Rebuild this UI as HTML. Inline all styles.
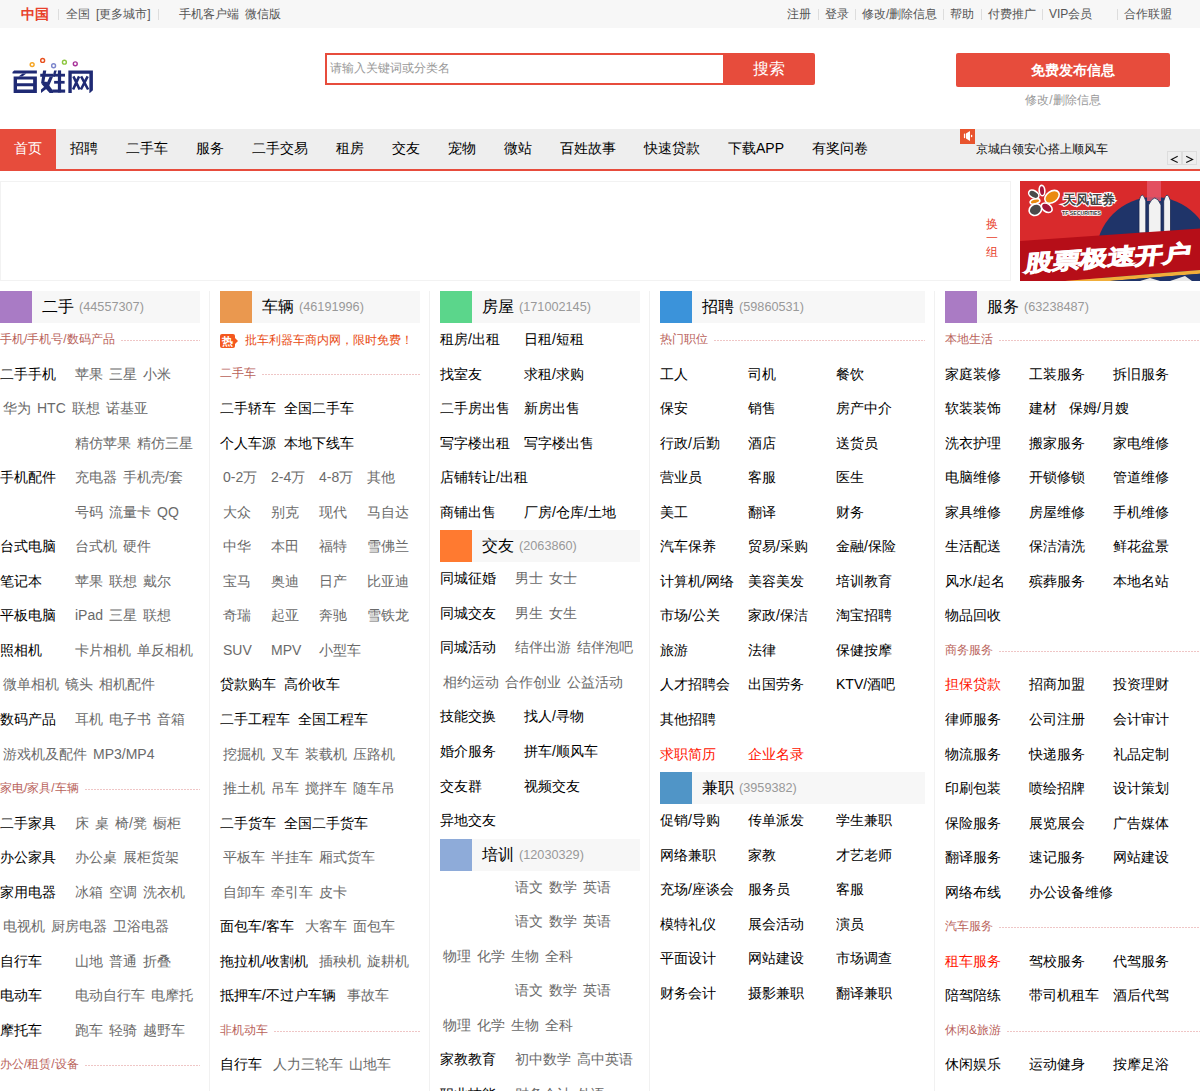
<!DOCTYPE html>
<html><head><meta charset="utf-8"><style>
*{margin:0;padding:0;box-sizing:border-box}
html,body{width:1200px;height:1091px;overflow:hidden;background:#fff}
body{position:relative;font-family:"Liberation Sans",sans-serif;font-size:12px;color:#333}
a{text-decoration:none;color:inherit}
.abs{position:absolute;white-space:nowrap}
.top{position:absolute;left:0;top:0;width:1200px;height:28px;background:#f7f7f7}
.top .t{position:absolute;top:0;line-height:28px;font-size:12px;color:#555;white-space:nowrap}
.top .sep{position:absolute;top:9px;width:1px;height:11px;background:#ddd}
.logo{position:absolute;left:0;top:40px}
.search{position:absolute;left:325px;top:53px;width:490px;height:32px;background:#e74c3c;border-radius:0 2px 2px 0}
.search .in{position:absolute;left:2px;top:2px;width:396px;height:28px;background:#fff;font-size:12px;color:#999;line-height:26px;padding-left:3px}
.search .btn{position:absolute;left:398px;top:0;width:92px;height:32px;color:#fff;font-size:16px;line-height:31px;text-align:center}
.pub{position:absolute;left:956px;top:53px;width:214px;height:34px;padding-left:19px;background:#e74c3c;border-radius:2px;color:#fff;font-weight:bold;font-size:14px;line-height:34px;text-align:center}
.pub2{position:absolute;left:956px;top:88px;width:214px;text-align:center;color:#999;font-size:12px;line-height:24px}
.nav{position:absolute;left:0;top:129px;width:1200px;height:40px;background:#eee;border-bottom:2px solid #e74c3c;box-sizing:content-box}
.nav a{position:absolute;top:0;height:40px;line-height:38px;font-size:14px;color:#000;padding:0 14px;white-space:nowrap}
.nav a.on{background:#e74c3c;color:#fff}
.ad{position:absolute;left:0;top:181px;width:1011px;height:100px;border:1px solid #f2f2f2}
.divs i{position:absolute;top:291px;width:1px;height:820px;background:#f1f1f1}
.col{position:absolute;top:291px}
.h{position:relative;height:32px;background:#f7f7f7;white-space:nowrap}
.h b{position:absolute;left:0;top:0;width:32px;height:32px}
.h .hn{position:absolute;left:42px;top:0;line-height:32px;font-size:16px;color:#000}
.h .hc{position:absolute;left:79px;top:0;line-height:32px;font-size:12.7px;color:#999}
.r{height:34.55px;line-height:34.55px;white-space:nowrap;font-size:14px}
.r a{display:inline-block;vertical-align:top;position:relative;top:-1px}
.b{color:#000;margin-right:8px}
.b[style*="width"]{margin-right:0}
.g{color:#6a6a6a;padding:0 3px}
.rd{color:#ff1400}
.s{height:34.55px;display:flex;align-items:center;font-size:12px;color:#b9625a}
.s i{flex:1;margin-left:6px;height:1px;background-image:linear-gradient(to right,#efc6c6 0,#efc6c6 2px,transparent 2px);background-size:3px 1px}
.hot{display:flex;align-items:center;position:relative;top:1px}
.hot em{font-style:normal;position:relative;display:inline-block;width:15px;height:14px;background:#f4581e;border-radius:2px;color:#fff;font-size:11px;line-height:14px;text-align:center;font-weight:bold}
.hot em:after{content:"";position:absolute;right:-3px;top:4px;border-left:3px solid #f4581e;border-top:3px solid transparent;border-bottom:3px solid transparent}
.hot .hr{font-size:12px;color:#e84a12;margin-left:10px}
.s span{position:relative;top:-1px}

</style></head><body>
<div class="top">
<span class="t" style="left:21px;color:#e8412c;font-weight:bold;font-size:14px">中国</span>
<i class="sep" style="left:58px"></i>
<span class="t" style="left:66px">全国</span>
<span class="t" style="left:96px">[更多城市]</span>
<i class="sep" style="left:158px"></i>
<span class="t" style="left:179px">手机客户端</span>
<span class="t" style="left:245px">微信版</span>
<span class="t" style="left:787px">注册</span><i class="sep" style="left:818px"></i>
<span class="t" style="left:825px">登录</span><i class="sep" style="left:855px"></i>
<span class="t" style="left:862px">修改/删除信息</span><i class="sep" style="left:943px"></i>
<span class="t" style="left:950px">帮助</span><i class="sep" style="left:981px"></i>
<span class="t" style="left:988px">付费推广</span><i class="sep" style="left:1042px"></i>
<span class="t" style="left:1049px">VIP会员</span><i class="sep" style="left:1117px"></i>
<span class="t" style="left:1124px">合作联盟</span>
</div>
<svg class="logo" style="left:8px;top:52px" width="90" height="46" viewBox="0 0 1200 613">
<g fill="none" stroke-width="19">
<circle cx="322" cy="168" r="26" stroke="#f5a524"/>
<circle cx="462" cy="112" r="26" stroke="#e8501e"/>
<circle cx="608" cy="183" r="26" stroke="#7c86cc"/>
<circle cx="752" cy="135" r="26" stroke="#8dc63f"/>
<circle cx="897" cy="157" r="26" stroke="#a83299"/>
</g>
<g fill="#1f2a74" fill-rule="evenodd">
<path d="M60,265 L82,245 H385 V285 H60 Z"/>
<path d="M195,285 H245 L190,328 H140 Z"/>
<path d="M75,325 H385 V545 H75 Z M120,365 V415 H335 V365 Z M120,458 V500 H335 V458 Z"/>
<path d="M430,290 H600 V330 H430 Z"/>
<path d="M468,245 H510 L482,420 H440 Z"/>
<path d="M470,395 H515 L600,515 V545 H555 L450,430 Z"/>
<path d="M555,330 H600 L540,470 L440,545 V500 L500,450 Z"/>
<path d="M615,245 H650 L625,330 H595 Z"/>
<path d="M665,245 H708 V540 H665 Z"/>
<path d="M610,290 H760 V328 H610 Z"/>
<path d="M615,385 H755 V422 H615 Z"/>
<path d="M590,500 H762 V542 H590 Z"/>
<path d="M805,245 H1132 V510 L1092,545 H1085 V290 H850 V545 H805 Z"/>
</g>
<g stroke="#1f2a74" stroke-width="34" fill="none" stroke-linecap="butt">
<path d="M872,325 L955,500 M948,325 L868,500 M975,325 L1068,500 M1062,325 L972,500"/>
</g>
</svg>
<div class="search"><div class="in">请输入关键词或分类名</div><div class="btn">搜索</div></div>
<div class="pub">免费发布信息</div>
<div class="pub2">修改/删除信息</div>
<div class="nav">
<a class="on" style="left:0">首页</a>
<a style="left:56px">招聘</a>
<a style="left:112px">二手车</a>
<a style="left:182px">服务</a>
<a style="left:238px">二手交易</a>
<a style="left:322px">租房</a>
<a style="left:378px">交友</a>
<a style="left:434px">宠物</a>
<a style="left:490px">微站</a>
<a style="left:546px">百姓故事</a>
<a style="left:630px">快速贷款</a>
<a style="left:714px">下载APP</a>
<a style="left:798px">有奖问卷</a>
<span style="position:absolute;left:960px;top:0;width:15px;height:15px;background:#e8542e"></span>
<svg style="position:absolute;left:960px;top:0" width="15" height="15"><rect x="3.9" y="4.5" width="1.3" height="4.7" rx=".6" fill="#fff"/><path d="M6,4.4 L10,1.9 V12.1 L6,9.6 Z" fill="#fff"/><ellipse cx="11.6" cy="7" rx=".7" ry="1.2" fill="#fff"/></svg>
<span style="position:absolute;left:976px;top:14px;line-height:12px;font-size:12px;color:#111;white-space:nowrap">京城白领安心搭上顺风车</span>
<span style="position:absolute;left:1167px;top:22px;width:15px;height:14px;border:1px solid #ddd"></span>
<span style="position:absolute;left:1182px;top:22px;width:15px;height:14px;border:1px solid #ddd"></span>
<svg style="position:absolute;left:1167px;top:22px" width="30" height="14"><path d="M10.7,5.2 L4.4,8.4 L10.7,11.6 M19.2,5.2 L25.6,8.4 L19.2,11.6" fill="none" stroke="#111" stroke-width="1.1"/></svg>
</div>
<div class="ad">
<span style="position:absolute;left:984px;top:35px;width:14px;font-size:12px;line-height:14px;color:#e8412c;text-align:center">换<br>一<br>组</span>
</div>
<svg style="position:absolute;left:1020px;top:181px" width="180" height="100" viewBox="0 0 180 100">
<rect width="180" height="100" fill="#d92a2c"/>
<circle cx="134" cy="74" r="58" fill="#1f3469"/>
<path d="M127,0 H141 V20 H127 Z" fill="#e4566a" opacity=".85"/>
<g fill="#f2f2f2" stroke="#1a2750" stroke-width="0.8">
<path d="M119,52 V20 Q122,8 125.8,20 V52 Z"/>
<path d="M143.7,52 V20 Q147,8 150.5,20 V52 Z"/>
<path d="M128.6,52 V24 Q134.8,10 141,24 V52 Z"/>
</g>
<path d="M0,60 L180,47.5 L180,89 L45,100 L0,100 Z" fill="#b60e18"/>
<path d="M45,100 L180,89 L180,92.7 L90,100 Z" fill="#f0ae3a"/>
<path d="M90,100 L180,92.7 L180,100 Z" fill="#1f3469"/><path d="M120,100 L130,97 L140,100 Z M150,100 L165,95 L172,100 Z" fill="#e8e8e8"/>
<g transform="translate(4,90) rotate(-3.8) skewX(-12)"><text x="0" y="0" font-size="22" font-weight="bold" fill="#fff" stroke="#fff" stroke-width="0.9" font-family="Liberation Sans" textLength="166" lengthAdjust="spacingAndGlyphs">股票极速开户</text></g>
<g stroke="#fff" stroke-width="1.6">
<ellipse cx="13.75" cy="13.3" rx="5.5" ry="3.6" fill="#4a4a4a" transform="rotate(30 13.75 13.3)"/>
<ellipse cx="22" cy="9.6" rx="2.8" ry="5.2" fill="#a3163a" transform="rotate(-5 22 9.6)"/>
<ellipse cx="32" cy="15.8" rx="8" ry="5.5" fill="#ea8a10" transform="rotate(-35 32 15.8)"/>
<ellipse cx="15" cy="20.4" rx="5" ry="2.4" fill="#ea8a10" transform="rotate(-15 15 20.4)"/>
<ellipse cx="15.4" cy="28.7" rx="6.5" ry="5.5" fill="#4a4a4a" transform="rotate(-30 15.4 28.7)"/>
<ellipse cx="26.7" cy="26.7" rx="6" ry="4" fill="#a3163a" transform="rotate(35 26.7 26.7)"/>
</g>
<text x="42.5" y="22.5" font-size="13" font-weight="bold" fill="#444" stroke="#fff" stroke-width="2.2" paint-order="stroke" font-family="Liberation Sans" textLength="52" lengthAdjust="spacingAndGlyphs">天风证券</text>
<text x="42" y="33.5" font-size="6" font-weight="bold" fill="#333" stroke="#fff" stroke-width="1.6" paint-order="stroke" font-family="Liberation Sans" textLength="39" lengthAdjust="spacingAndGlyphs">TF SECURITIES</text>
</svg>

<div class="divs"><i style="left:209px"></i><i style="left:429px"></i><i style="left:649px"></i><i style="left:934px"></i></div>
<div class="col" style="left:0px;width:200px"><div class="h"><b style="background:#a97bc5"></b><span class="hn">二手</span><span class="hc">(44557307)</span></div><div class="s"><span>手机/手机号/数码产品</span><i></i></div><div class="r"><a class="b" style="width:72px;">二手手机</a><a class="g">苹果</a><a class="g">三星</a><a class="g">小米</a></div><div class="r"><a class="g">华为</a><a class="g">HTC</a><a class="g">联想</a><a class="g">诺基亚</a></div><div class="r" style="padding-left:72px"><a class="g">精仿苹果</a><a class="g">精仿三星</a></div><div class="r"><a class="b" style="width:72px;">手机配件</a><a class="g">充电器</a><a class="g">手机壳/套</a></div><div class="r" style="padding-left:72px"><a class="g">号码</a><a class="g">流量卡</a><a class="g">QQ</a></div><div class="r"><a class="b" style="width:72px;">台式电脑</a><a class="g">台式机</a><a class="g">硬件</a></div><div class="r"><a class="b" style="width:72px;">笔记本</a><a class="g">苹果</a><a class="g">联想</a><a class="g">戴尔</a></div><div class="r"><a class="b" style="width:72px;">平板电脑</a><a class="g">iPad</a><a class="g">三星</a><a class="g">联想</a></div><div class="r"><a class="b" style="width:72px;">照相机</a><a class="g">卡片相机</a><a class="g">单反相机</a></div><div class="r"><a class="g">微单相机</a><a class="g">镜头</a><a class="g">相机配件</a></div><div class="r"><a class="b" style="width:72px;">数码产品</a><a class="g">耳机</a><a class="g">电子书</a><a class="g">音箱</a></div><div class="r"><a class="g">游戏机及配件</a><a class="g">MP3/MP4</a></div><div class="s"><span>家电/家具/车辆</span><i></i></div><div class="r"><a class="b" style="width:72px;">二手家具</a><a class="g">床</a><a class="g">桌</a><a class="g">椅/凳</a><a class="g">橱柜</a></div><div class="r"><a class="b" style="width:72px;">办公家具</a><a class="g">办公桌</a><a class="g">展柜货架</a></div><div class="r"><a class="b" style="width:72px;">家用电器</a><a class="g">冰箱</a><a class="g">空调</a><a class="g">洗衣机</a></div><div class="r"><a class="g">电视机</a><a class="g">厨房电器</a><a class="g">卫浴电器</a></div><div class="r"><a class="b" style="width:72px;">自行车</a><a class="g">山地</a><a class="g">普通</a><a class="g">折叠</a></div><div class="r"><a class="b" style="width:72px;">电动车</a><a class="g">电动自行车</a><a class="g">电摩托</a></div><div class="r"><a class="b" style="width:72px;">摩托车</a><a class="g">跑车</a><a class="g">轻骑</a><a class="g">越野车</a></div><div class="s"><span>办公/租赁/设备</span><i></i></div></div>
<div class="col" style="left:220px;width:200px"><div class="h"><b style="background:#ea984f"></b><span class="hn">车辆</span><span class="hc">(46191996)</span></div><div class="r hot"><em>热</em><a class="hr">批车利器车商内网，限时免费！</a></div><div class="s"><span>二手车</span><i></i></div><div class="r"><a class="b">二手轿车</a><a class="b">全国二手车</a></div><div class="r"><a class="b">个人车源</a><a class="b">本地下线车</a></div><div class="r"><a class="g" style="width:48px">0-2万</a><a class="g" style="width:48px">2-4万</a><a class="g" style="width:48px">4-8万</a><a class="g" style="width:48px">其他</a></div><div class="r"><a class="g" style="width:48px">大众</a><a class="g" style="width:48px">别克</a><a class="g" style="width:48px">现代</a><a class="g" style="width:48px">马自达</a></div><div class="r"><a class="g" style="width:48px">中华</a><a class="g" style="width:48px">本田</a><a class="g" style="width:48px">福特</a><a class="g" style="width:48px">雪佛兰</a></div><div class="r"><a class="g" style="width:48px">宝马</a><a class="g" style="width:48px">奥迪</a><a class="g" style="width:48px">日产</a><a class="g" style="width:48px">比亚迪</a></div><div class="r"><a class="g" style="width:48px">奇瑞</a><a class="g" style="width:48px">起亚</a><a class="g" style="width:48px">奔驰</a><a class="g" style="width:48px">雪铁龙</a></div><div class="r"><a class="g" style="width:48px">SUV</a><a class="g" style="width:48px">MPV</a><a class="g" style="width:48px">小型车</a></div><div class="r"><a class="b">贷款购车</a><a class="b">高价收车</a></div><div class="r"><a class="b">二手工程车</a><a class="b">全国工程车</a></div><div class="r"><a class="g">挖掘机</a><a class="g">叉车</a><a class="g">装载机</a><a class="g">压路机</a></div><div class="r"><a class="g">推土机</a><a class="g">吊车</a><a class="g">搅拌车</a><a class="g">随车吊</a></div><div class="r"><a class="b">二手货车</a><a class="b">全国二手货车</a></div><div class="r"><a class="g">平板车</a><a class="g">半挂车</a><a class="g">厢式货车</a></div><div class="r"><a class="g">自卸车</a><a class="g">牵引车</a><a class="g">皮卡</a></div><div class="r"><a class="b">面包车/客车</a><a class="g">大客车</a><a class="g">面包车</a></div><div class="r"><a class="b">拖拉机/收割机</a><a class="g">插秧机</a><a class="g">旋耕机</a></div><div class="r"><a class="b">抵押车/不过户车辆</a><a class="g">事故车</a></div><div class="s"><span>非机动车</span><i></i></div><div class="r"><a class="b">自行车</a><a class="g">人力三轮车</a><a class="g">山地车</a></div><div class="r"><a class="g">电动三轮车</a><a class="g">燃油三轮车</a><a class="g">三轮摩托</a></div></div>
<div class="col" style="left:440px;width:200px"><div class="h"><b style="background:#5bd68b"></b><span class="hn">房屋</span><span class="hc">(171002145)</span></div><div class="r"><a class="b" style="width:84px;">租房/出租</a><a class="b" style="width:84px;">日租/短租</a></div><div class="r"><a class="b" style="width:84px;">找室友</a><a class="b" style="width:84px;">求租/求购</a></div><div class="r"><a class="b" style="width:84px;">二手房出售</a><a class="b" style="width:84px;">新房出售</a></div><div class="r"><a class="b" style="width:84px;">写字楼出租</a><a class="b" style="width:84px;">写字楼出售</a></div><div class="r"><a class="b" style="width:84px;">店铺转让/出租</a></div><div class="r"><a class="b" style="width:84px;">商铺出售</a><a class="b" style="width:84px;">厂房/仓库/土地</a></div><div class="h"><b style="background:#ff7a30"></b><span class="hn">交友</span><span class="hc">(2063860)</span></div><div class="r"><a class="b" style="width:72px;">同城征婚</a><a class="g">男士</a><a class="g">女士</a></div><div class="r"><a class="b" style="width:72px;">同城交友</a><a class="g">男生</a><a class="g">女生</a></div><div class="r"><a class="b" style="width:72px;">同城活动</a><a class="g">结伴出游</a><a class="g">结伴泡吧</a></div><div class="r"><a class="g">相约运动</a><a class="g">合作创业</a><a class="g">公益活动</a></div><div class="r"><a class="b" style="width:84px;">技能交换</a><a class="b" style="width:84px;">找人/寻物</a></div><div class="r"><a class="b" style="width:84px;">婚介服务</a><a class="b" style="width:84px;">拼车/顺风车</a></div><div class="r"><a class="b" style="width:84px;">交友群</a><a class="b" style="width:84px;">视频交友</a></div><div class="r"><a class="b" style="width:84px;">异地交友</a></div><div class="h"><b style="background:#8eabd9"></b><span class="hn">培训</span><span class="hc">(12030329)</span></div><div class="r" style="padding-left:72px"><a class="g">语文</a><a class="g">数学</a><a class="g">英语</a></div><div class="r" style="padding-left:72px"><a class="g">语文</a><a class="g">数学</a><a class="g">英语</a></div><div class="r"><a class="g">物理</a><a class="g">化学</a><a class="g">生物</a><a class="g">全科</a></div><div class="r" style="padding-left:72px"><a class="g">语文</a><a class="g">数学</a><a class="g">英语</a></div><div class="r"><a class="g">物理</a><a class="g">化学</a><a class="g">生物</a><a class="g">全科</a></div><div class="r"><a class="b" style="width:72px;">家教教育</a><a class="g">初中数学</a><a class="g">高中英语</a></div><div class="r"><a class="b" style="width:72px;">职业技能</a><a class="g">财务会计</a><a class="g">外语</a></div></div>
<div class="col" style="left:660px;width:265px"><div class="h"><b style="background:#3b93da"></b><span class="hn">招聘</span><span class="hc">(59860531)</span></div><div class="s"><span>热门职位</span><i></i></div><div class="r"><a class="b" style="width:88px;">工人</a><a class="b" style="width:88px;">司机</a><a class="b" style="width:88px;">餐饮</a></div><div class="r"><a class="b" style="width:88px;">保安</a><a class="b" style="width:88px;">销售</a><a class="b" style="width:88px;">房产中介</a></div><div class="r"><a class="b" style="width:88px;">行政/后勤</a><a class="b" style="width:88px;">酒店</a><a class="b" style="width:88px;">送货员</a></div><div class="r"><a class="b" style="width:88px;">营业员</a><a class="b" style="width:88px;">客服</a><a class="b" style="width:88px;">医生</a></div><div class="r"><a class="b" style="width:88px;">美工</a><a class="b" style="width:88px;">翻译</a><a class="b" style="width:88px;">财务</a></div><div class="r"><a class="b" style="width:88px;">汽车保养</a><a class="b" style="width:88px;">贸易/采购</a><a class="b" style="width:88px;">金融/保险</a></div><div class="r"><a class="b" style="width:88px;">计算机/网络</a><a class="b" style="width:88px;">美容美发</a><a class="b" style="width:88px;">培训教育</a></div><div class="r"><a class="b" style="width:88px;">市场/公关</a><a class="b" style="width:88px;">家政/保洁</a><a class="b" style="width:88px;">淘宝招聘</a></div><div class="r"><a class="b" style="width:88px;">旅游</a><a class="b" style="width:88px;">法律</a><a class="b" style="width:88px;">保健按摩</a></div><div class="r"><a class="b" style="width:88px;">人才招聘会</a><a class="b" style="width:88px;">出国劳务</a><a class="b" style="width:88px;">KTV/酒吧</a></div><div class="r"><a class="b" style="width:88px;">其他招聘</a></div><div class="r"><a class="rd" style="width:88px">求职简历</a><a class="rd" style="width:88px">企业名录</a></div><div class="h"><b style="background:#5095c7"></b><span class="hn">兼职</span><span class="hc">(3959382)</span></div><div class="r"><a class="b" style="width:88px;">促销/导购</a><a class="b" style="width:88px;">传单派发</a><a class="b" style="width:88px;">学生兼职</a></div><div class="r"><a class="b" style="width:88px;">网络兼职</a><a class="b" style="width:88px;">家教</a><a class="b" style="width:88px;">才艺老师</a></div><div class="r"><a class="b" style="width:88px;">充场/座谈会</a><a class="b" style="width:88px;">服务员</a><a class="b" style="width:88px;">客服</a></div><div class="r"><a class="b" style="width:88px;">模特礼仪</a><a class="b" style="width:88px;">展会活动</a><a class="b" style="width:88px;">演员</a></div><div class="r"><a class="b" style="width:88px;">平面设计</a><a class="b" style="width:88px;">网站建设</a><a class="b" style="width:88px;">市场调查</a></div><div class="r"><a class="b" style="width:88px;">财务会计</a><a class="b" style="width:88px;">摄影兼职</a><a class="b" style="width:88px;">翻译兼职</a></div></div>
<div class="col" style="left:945px;width:255px"><div class="h"><b style="background:#aa7bc4"></b><span class="hn">服务</span><span class="hc">(63238487)</span></div><div class="s"><span>本地生活</span><i></i></div><div class="r"><a class="b" style="width:84px;">家庭装修</a><a class="b" style="width:84px;">工装服务</a><a class="b" style="width:84px;">拆旧服务</a></div><div class="r"><a class="b" style="width:84px;">软装装饰</a><a class="b" style="width:40px;">建材</a><a class="b">保姆/月嫂</a></div><div class="r"><a class="b" style="width:84px;">洗衣护理</a><a class="b" style="width:84px;">搬家服务</a><a class="b" style="width:84px;">家电维修</a></div><div class="r"><a class="b" style="width:84px;">电脑维修</a><a class="b" style="width:84px;">开锁修锁</a><a class="b" style="width:84px;">管道维修</a></div><div class="r"><a class="b" style="width:84px;">家具维修</a><a class="b" style="width:84px;">房屋维修</a><a class="b" style="width:84px;">手机维修</a></div><div class="r"><a class="b" style="width:84px;">生活配送</a><a class="b" style="width:84px;">保洁清洗</a><a class="b" style="width:84px;">鲜花盆景</a></div><div class="r"><a class="b" style="width:84px;">风水/起名</a><a class="b" style="width:84px;">殡葬服务</a><a class="b" style="width:84px;">本地名站</a></div><div class="r"><a class="b" style="width:84px;">物品回收</a></div><div class="s"><span>商务服务</span><i></i></div><div class="r"><a class="rd" style="width:84px">担保贷款</a><a class="b" style="width:84px;">招商加盟</a><a class="b" style="width:84px;">投资理财</a></div><div class="r"><a class="b" style="width:84px;">律师服务</a><a class="b" style="width:84px;">公司注册</a><a class="b" style="width:84px;">会计审计</a></div><div class="r"><a class="b" style="width:84px;">物流服务</a><a class="b" style="width:84px;">快递服务</a><a class="b" style="width:84px;">礼品定制</a></div><div class="r"><a class="b" style="width:84px;">印刷包装</a><a class="b" style="width:84px;">喷绘招牌</a><a class="b" style="width:84px;">设计策划</a></div><div class="r"><a class="b" style="width:84px;">保险服务</a><a class="b" style="width:84px;">展览展会</a><a class="b" style="width:84px;">广告媒体</a></div><div class="r"><a class="b" style="width:84px;">翻译服务</a><a class="b" style="width:84px;">速记服务</a><a class="b" style="width:84px;">网站建设</a></div><div class="r"><a class="b" style="width:84px;">网络布线</a><a class="b" style="width:84px;">办公设备维修</a></div><div class="s"><span>汽车服务</span><i></i></div><div class="r"><a class="rd" style="width:84px">租车服务</a><a class="b" style="width:84px;">驾校服务</a><a class="b" style="width:84px;">代驾服务</a></div><div class="r"><a class="b" style="width:84px;">陪驾陪练</a><a class="b" style="width:84px;">带司机租车</a><a class="b" style="width:84px;">酒后代驾</a></div><div class="s"><span>休闲&amp;旅游</span><i></i></div><div class="r"><a class="b" style="width:84px;">休闲娱乐</a><a class="b" style="width:84px;">运动健身</a><a class="b" style="width:84px;">按摩足浴</a></div></div>

</body></html>
